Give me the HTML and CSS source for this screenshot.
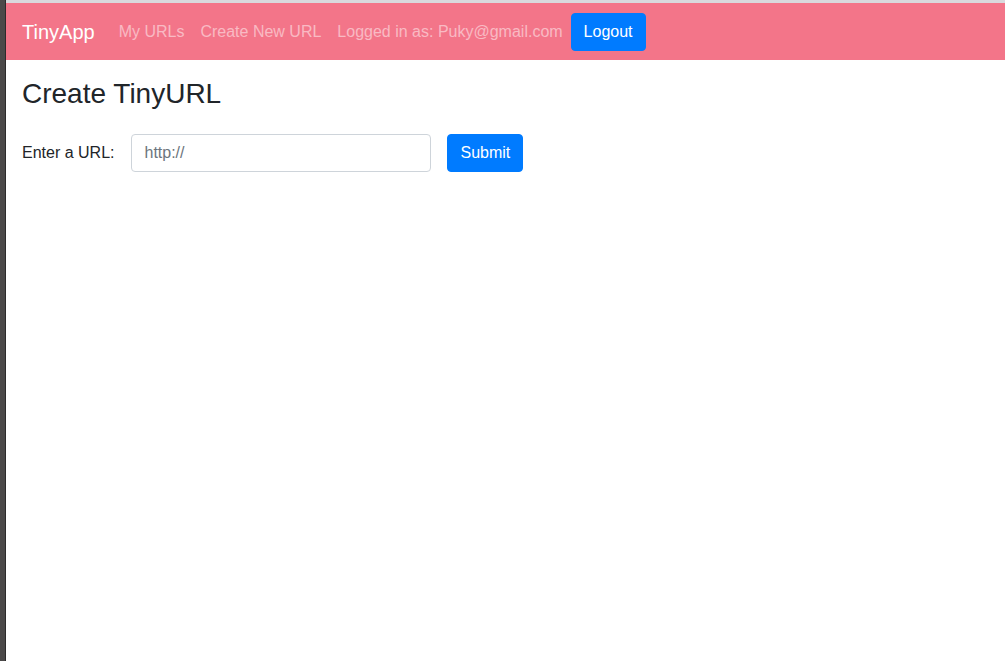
FILE: index.html
```html
<!DOCTYPE html>
<html lang="en">
<head>
    <meta charset="UTF-8">
    <meta name="viewport" content="width=device-width, initial-scale=1.0">
    <title>TinyApp</title>
    <link rel="stylesheet" href="styles.css">
</head>
<body>
    <div class="frame-edge"></div>
    <div class="page">
        <nav class="navbar">
            <a class="brand" href="/urls">TinyApp</a>
            <a class="nav-link" href="/urls">My URLs</a>
            <a class="nav-link" href="/urls/new">Create New URL</a>
            <span class="nav-link">Logged in as: Puky@gmail.com</span>
            <form class="logout-form" method="POST" action="/logout">
                <button type="submit" class="btn">Logout</button>
            </form>
        </nav>

        <main class="content">
            <h3 class="title">Create TinyURL</h3>
            <form class="url-form" action="/urls" method="POST">
                <label for="longURL">Enter a URL:</label>
                <input type="text" id="longURL" name="longURL" class="form-control" placeholder="http://">
                <button type="submit" class="btn">Submit</button>
            </form>
        </main>
    </div>
</body>
</html>
```

FILE: styles.css
```css
html, body {
    height: 100%;
}

body {
    margin: 0;
    display: flex;
    font-family: "Liberation Sans", Arial, sans-serif;
    font-size: 16px;
    line-height: 1.5;
    color: #212529;
    background-color: #fff;
}

.frame-edge {
    width: 5px;
    flex-shrink: 0;
    background-color: #4b4949;
    border-right: 1px solid #2c2b2b;
}

.page {
    flex: 1;
    border-top: 3px solid #d9d9dd;
}

/* top bar */
.navbar {
    display: flex;
    align-items: center;
    padding: 9px 16px 8px;
    background-color: #f37589;
}

.brand {
    color: #fff;
    font-size: 20px;
    line-height: 30px;
    padding: 5px 0;
    margin-right: 16px;
    text-decoration: none;
}

.nav-link {
    color: rgba(255, 255, 255, 0.5);
    padding: 8px;
    text-decoration: none;
}

.logout-form {
    margin: 0;
}

.btn {
    font-family: inherit;
    font-size: 16px;
    line-height: 24px;
    padding: 6px 12px;
    color: #fff;
    background-color: #007bff;
    border: 1px solid #007bff;
    border-radius: 4px;
    cursor: pointer;
}

/* page body */
.content {
    padding: 17px 16px 16px;
}

.title {
    margin: 0 0 8px;
    font-size: 28px;
    font-weight: 500;
    line-height: 1.2;
}

.url-form {
    display: flex;
    align-items: center;
    margin-top: 23px;
}

.url-form label {
    margin-right: 17px;
}

.form-control {
    width: 300px;
    height: 38px;
    box-sizing: border-box;
    padding: 6px 12px;
    margin-right: 16px;
    font-family: inherit;
    font-size: 16px;
    color: #495057;
    border: 1px solid #ced4da;
    border-radius: 4px;
}

.form-control::placeholder {
    color: #6c757d;
}
```
